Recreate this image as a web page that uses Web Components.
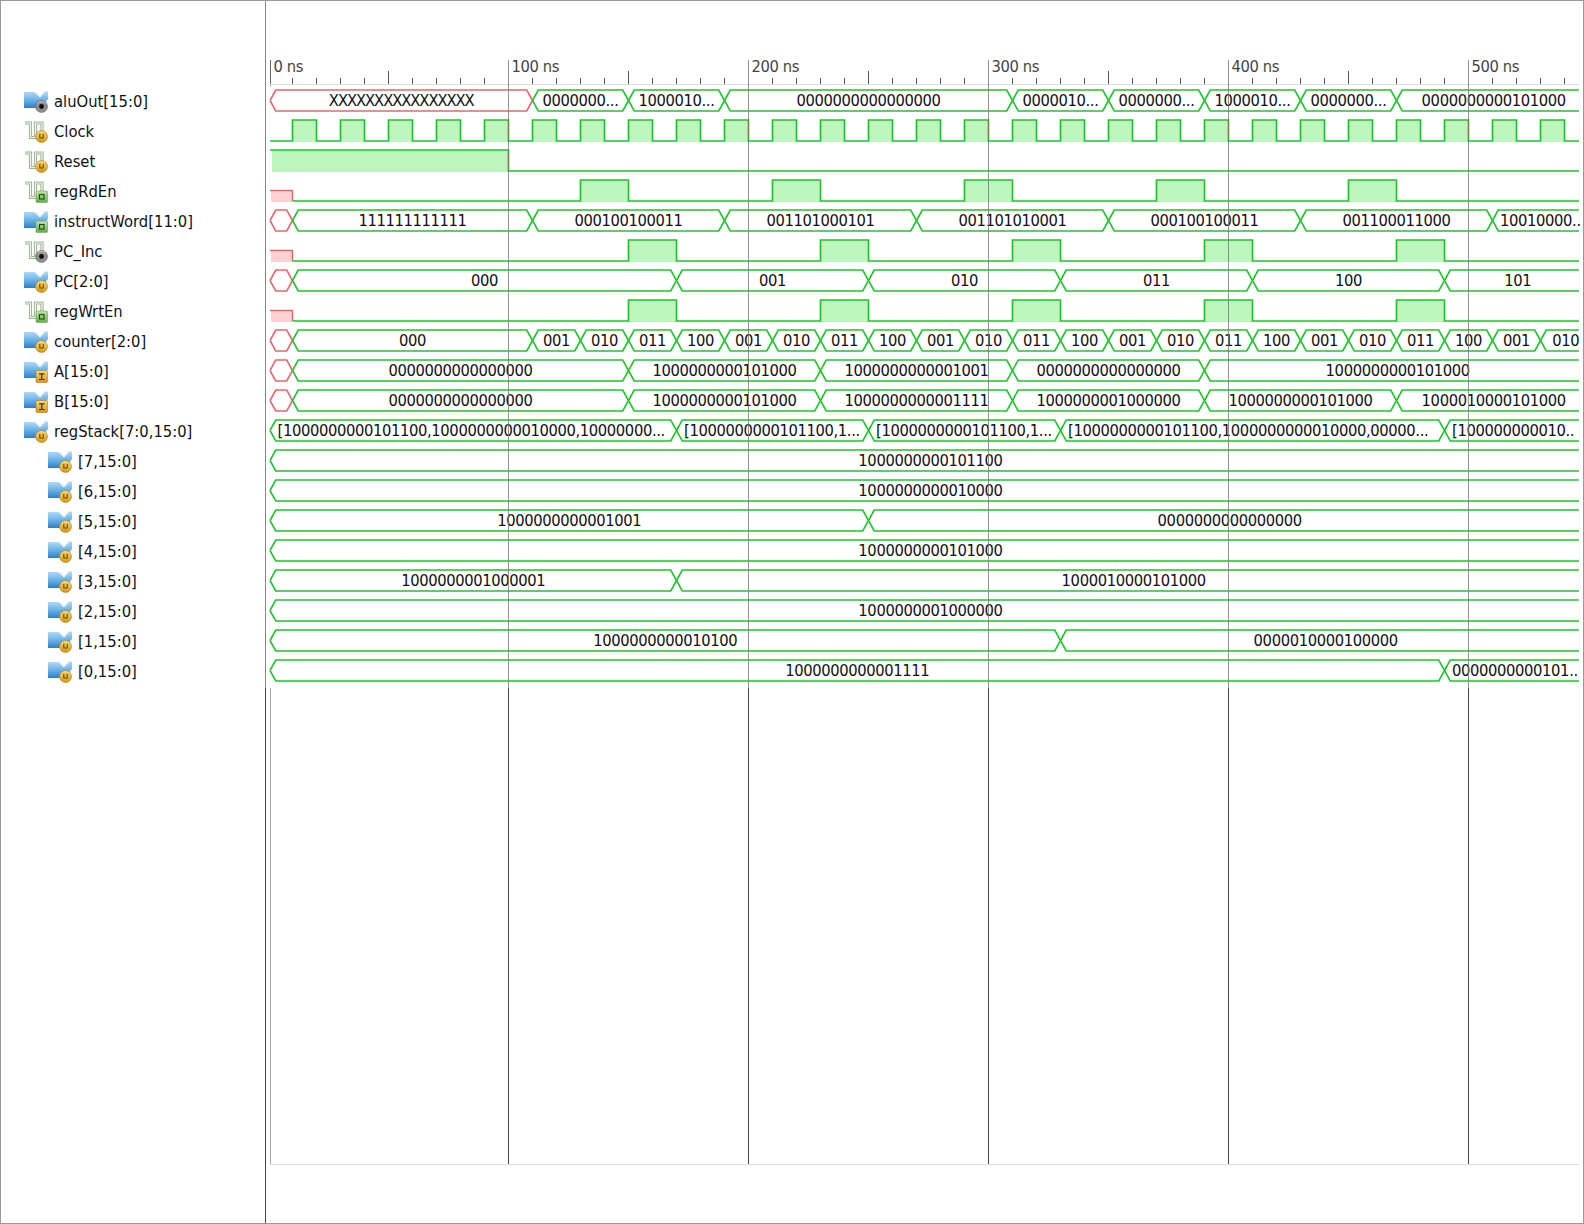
<!DOCTYPE html>
<html>
<head>
<meta charset="utf-8">
<title>Waveform</title>
<style>
  html, body { margin: 0; padding: 0; background: #fff; }
</style>
</head>
<body>
<wave-window>
  <signal-name slot="names" icon="bus" badge="io">aluOut[15:0]</signal-name>
  <signal-name slot="names" icon="bit" badge="u">Clock</signal-name>
  <signal-name slot="names" icon="bit" badge="u">Reset</signal-name>
  <signal-name slot="names" icon="bit" badge="o">regRdEn</signal-name>
  <signal-name slot="names" icon="bus" badge="o">instructWord[11:0]</signal-name>
  <signal-name slot="names" icon="bit" badge="io">PC_Inc</signal-name>
  <signal-name slot="names" icon="bus" badge="u">PC[2:0]</signal-name>
  <signal-name slot="names" icon="bit" badge="o">regWrtEn</signal-name>
  <signal-name slot="names" icon="bus" badge="u">counter[2:0]</signal-name>
  <signal-name slot="names" icon="bus" badge="i">A[15:0]</signal-name>
  <signal-name slot="names" icon="bus" badge="i">B[15:0]</signal-name>
  <signal-name slot="names" icon="bus" badge="u">regStack[7:0,15:0]</signal-name>
  <signal-name slot="names" icon="bus" badge="u" indent>[7,15:0]</signal-name>
  <signal-name slot="names" icon="bus" badge="u" indent>[6,15:0]</signal-name>
  <signal-name slot="names" icon="bus" badge="u" indent>[5,15:0]</signal-name>
  <signal-name slot="names" icon="bus" badge="u" indent>[4,15:0]</signal-name>
  <signal-name slot="names" icon="bus" badge="u" indent>[3,15:0]</signal-name>
  <signal-name slot="names" icon="bus" badge="u" indent>[2,15:0]</signal-name>
  <signal-name slot="names" icon="bus" badge="u" indent>[1,15:0]</signal-name>
  <signal-name slot="names" icon="bus" badge="u" indent>[0,15:0]</signal-name>

  <wave-bus slot="waves" data="0:!XXXXXXXXXXXXXXXX|110:0000000...|150:1000010...|190:0000000000000000|310:0000010...|350:0000000...|390:1000010...|430:0000000...|470:0000000000101000"></wave-bus>
  <wave-bit slot="waves" clock></wave-bit>
  <wave-bit slot="waves" start="1" edges="100"></wave-bit>
  <wave-bit slot="waves" unknown edges="130 150 210 230 290 310 370 390 450 470"></wave-bit>
  <wave-bus slot="waves" data="0:!|10:111111111111|110:000100100011|190:001101000101|270:001101010001|350:000100100011|430:001100011000|510:&lt;10010000.."></wave-bus>
  <wave-bit slot="waves" unknown edges="150 170 230 250 310 330 390 410 470 490"></wave-bit>
  <wave-bus slot="waves" data="0:!|10:000|170:001|250:010|330:011|410:100|490:101"></wave-bus>
  <wave-bit slot="waves" unknown edges="150 170 230 250 310 330 390 410 470 490"></wave-bit>
  <wave-bus slot="waves" data="0:!|10:000|110:001|130:010|150:011|170:100|190:001|210:010|230:011|250:100|270:001|290:010|310:011|330:100|350:001|370:010|390:011|410:100|430:001|450:010|470:011|490:100|510:001|530:010"></wave-bus>
  <wave-bus slot="waves" data="0:!|10:0000000000000000|150:1000000000101000|230:1000000000001001|310:0000000000000000|390:1000000000101000"></wave-bus>
  <wave-bus slot="waves" data="0:!|10:0000000000000000|150:1000000000101000|230:1000000000001111|310:1000000001000000|390:1000000000101000|470:1000010000101000"></wave-bus>
  <wave-bus slot="waves" data="0:&lt;[1000000000101100,1000000000010000,10000000...|170:&lt;[1000000000101100,1...|250:&lt;[1000000000101100,1...|330:&lt;[1000000000101100,1000000000010000,00000...|490:&lt;[100000000010.."></wave-bus>
  <wave-bus slot="waves" data="0:1000000000101100"></wave-bus>
  <wave-bus slot="waves" data="0:1000000000010000"></wave-bus>
  <wave-bus slot="waves" data="0:1000000000001001|250:0000000000000000"></wave-bus>
  <wave-bus slot="waves" data="0:1000000000101000"></wave-bus>
  <wave-bus slot="waves" data="0:1000000001000001|170:1000010000101000"></wave-bus>
  <wave-bus slot="waves" data="0:1000000001000000"></wave-bus>
  <wave-bus slot="waves" data="0:1000000000010100|330:0000010000100000"></wave-bus>
  <wave-bus slot="waves" data="0:1000000000001111|490:&lt;0000000000101.."></wave-bus>
</wave-window>

<script>
// page x of a simulation time in ns, 100 ns is 240 px
const T0 = 268.5;
const PX_NS = 2.4;
const T_END = 551;
const WAVE_LEFT = 266;
const WAVE_W = 1316;
const ROW_H = 30;
const HIGH = 4;
const LOW = 25;
const MID = 14.5;
const GREEN = "#22c22e";
const RED = "#e2686c";
const FONT = '"DejaVu Sans Condensed","DejaVu Sans",sans-serif';
const TEXT_CSS = `font: 16.4px ${FONT}; font-stretch: condensed; letter-spacing: -0.37px;`;

function tx(t) { return T0 + t * PX_NS; }

function svgOpen() {
  return `<svg xmlns="http://www.w3.org/2000/svg" width="${WAVE_W}" height="${ROW_H}" viewBox="${WAVE_LEFT} 0 ${WAVE_W} ${ROW_H}">`;
}

class WaveWindow extends HTMLElement {
  constructor() {
    super();
    this.attachShadow({ mode: "open" });
    let lines = "";
    for (let t = 0; t <= 500; t += 100) {
      let x = t === 0 ? 270.5 : tx(t);
      if (t > 0) {
        lines += `<path d="M${x} 60V688" stroke="#777" stroke-opacity=".8"/>`;
        lines += `<path d="M${x} 688V1164" stroke="#444"/>`;
      } else {
        lines += `<path d="M${x} 688V1164" stroke="#aaa"/>`;
      }
    }
    this.shadowRoot.innerHTML = `
      <style>
        :host { display: grid; grid-template-columns: 265px 1fr; width: 1584px; height: 1224px;
          box-sizing: border-box; border: 1px solid #999; background: #fff; font-family: ${FONT}; }
        .names { padding-top: 85px; background: linear-gradient(#888 0 687px, #444 687px) right / 1px 100% no-repeat; }
        .waves { position: relative; }
        .overlay { position: absolute; left: -266px; top: -1px; pointer-events: none; }
      </style>
      <div class="names"><slot name="names"></slot></div>
      <div class="waves">
        <wave-ruler></wave-ruler>
        <slot name="waves"></slot>
        <svg class="overlay" xmlns="http://www.w3.org/2000/svg" width="1584" height="1224" fill="none">
          ${lines}
          <path d="M270 1164.5H1579" stroke="#ddd"/>
        </svg>
      </div>`;
  }
}

class WaveRuler extends HTMLElement {
  constructor() {
    super();
    this.attachShadow({ mode: "open" });
    let ticks = "";
    let labels = "";
    for (let t = 10; t <= 540; t += 10) {
      if (t % 100 === 0) continue;
      let top = t % 50 === 0 ? 71 : 78;
      ticks += `<path d="M${tx(t)} ${top}V84" stroke="#555"/>`;
    }
    for (let t = 0; t <= 500; t += 100) {
      let x = t === 0 ? 270.5 : tx(t);
      labels += `<text x="${x + 3}" y="72">${t} ns</text>`;
    }
    this.shadowRoot.innerHTML = `
      <style>
        :host { display: block; height: 86px; margin-top: -1px; }
        svg { display: block; }
        text { ${TEXT_CSS} fill: #444; }
      </style>
      <svg xmlns="http://www.w3.org/2000/svg" width="${WAVE_W}" height="86" viewBox="${WAVE_LEFT} 0 ${WAVE_W} 86" fill="none">
        <path d="M270.5 60V90" stroke="#666"/>
        <path d="M270 84.5H1579" stroke="#ddd"/>
        ${ticks}
        ${labels}
      </svg>`;
  }
}

// name column entry with its icon
class SignalName extends HTMLElement {
  constructor() {
    super();
    this.attachShadow({ mode: "open" });
  }
  connectedCallback() {
    let art = this.getAttribute("icon") === "bus" ? this.busArt() : this.bitArt();
    this.shadowRoot.innerHTML = `
      <style>
        :host { display: flex; align-items: center; height: 30px; gap: 6px; color: #111;
          padding-left: ${this.hasAttribute("indent") ? 47 : 23}px;
          font: 16.45px ${FONT}; font-stretch: condensed; white-space: nowrap; }
        svg { flex: none; }
      </style>
      <svg xmlns="http://www.w3.org/2000/svg" width="24" height="24" viewBox="0 0 24 24" fill="none">
        <defs>
          <linearGradient id="b" x1="0" y1="0" x2="0" y2="1">
            <stop offset="0" stop-color="#b4dbf5"/><stop offset=".55" stop-color="#66afe6"/><stop offset="1" stop-color="#2f7fc8"/>
          </linearGradient>
          <linearGradient id="y" x1="0" y1="0" x2="0" y2="1">
            <stop offset="0" stop-color="#f7dc7a"/><stop offset="1" stop-color="#d8950f"/>
          </linearGradient>
          <linearGradient id="g" x1="0" y1="0" x2="0" y2="1">
            <stop offset="0" stop-color="#c4e6a8"/><stop offset="1" stop-color="#5fae45"/>
          </linearGradient>
        </defs>
        ${art}
        ${this.badgeArt()}
      </svg>
      <span><slot></slot></span>`;
  }
  busArt() {
    return `<path d="M0 3H10.5L16 8.5L21 2.5H24V10L20 15H14V19H0Z" fill="url(#b)"/>
      <path d="M11 2.5L16 7.5M21 2L16 7.5" stroke="#e6f2fa" stroke-width="1.2"/>`;
  }
  bitArt() {
    return `<path d="M1 4H6.5V18.5H11.5V4H18V13" stroke="#9cb596" stroke-width="3.2"/>
      <path d="M1 4H6.5V18.5H11.5V4H18V13" stroke="#eef5ea" stroke-width="1.2"/>`;
  }
  badgeArt() {
    let b = this.getAttribute("badge");
    if (b === "u") {
      return `<circle cx="17.5" cy="17.5" r="6" fill="url(#y)" stroke="#a87c20" stroke-width=".6"/>
        <path d="M15.8 14.8V19H19.2V14.8" stroke="#6b4a08" stroke-width="1.1"/>`;
    }
    if (b === "io") {
      return `<circle cx="17.5" cy="17.5" r="6" fill="#8d8d8d" stroke="#6a6a6a" stroke-width=".6"/>
        <circle cx="17.5" cy="17.5" r="2.4" fill="#111"/>
        <path d="M13.5 14.5A5 5 0 0 1 21.5 14.5" stroke="#d0d0d0"/>`;
    }
    if (b === "o") {
      return `<rect x="12" y="12" width="11.5" height="11.5" rx="1" fill="url(#g)" stroke="#6f9f58" stroke-width=".6"/>
        <rect x="15.5" y="15.5" width="4.5" height="4.5" stroke="#1e4d12" stroke-width="1.1"/>`;
    }
    return `<rect x="12" y="11.5" width="11.5" height="12" rx="1" fill="url(#y)" stroke="#a87c20" stroke-width=".6"/>
      <path d="M15 14.8H20.5M17.75 14.8V20.5M15 20.5H20.5" stroke="#4d3505" stroke-width="1.2"/>`;
  }
}

// single bit trace, edges are the ns where it toggles
class WaveBit extends HTMLElement {
  constructor() {
    super();
    this.attachShadow({ mode: "open" });
  }
  connectedCallback() {
    let edges = [];
    if (this.hasAttribute("clock")) {
      for (let t = 10; t <= 540; t += 10) edges.push(t);
    } else {
      edges = this.getAttribute("edges").split(" ").map(Number);
    }
    let unknown = this.hasAttribute("unknown");
    let level = this.getAttribute("start") === "1";
    let x0 = unknown ? tx(10) : 270;
    let line = `M${x0} ${level ? HIGH : LOW}`;
    let fill = "";
    let last = x0;
    edges.forEach(function(t) {
      let x = tx(t);
      if (level) {
        let inset = last === 270 ? 2 : 0;
        fill += `<rect x="${last + inset}" y="${HIGH}" width="${x - last - inset}" height="${LOW + 1 - HIGH}"/>`;
      }
      line += `H${x}V${level ? LOW : HIGH}`;
      level = !level;
      last = x;
    });
    line += `H1579`;
    let red = "";
    if (unknown) {
      red = `<rect x="271" y="${MID}" width="${tx(10) - 271}" height="${LOW + 1 - MID}" fill="#ffd0d2"/>
        <path d="M270 ${MID}H${tx(10)}V${LOW}" fill="none" stroke="${RED}" stroke-width="1.5"/>`;
    }
    this.shadowRoot.innerHTML = `
      <style>:host { display: block; height: ${ROW_H}px; } svg { display: block; }</style>
      ${svgOpen()}
        <g fill="#bdf5bf">${fill}</g>
        ${red}
        <path d="${line}" fill="none" stroke="${GREEN}" stroke-width="1.7"/>
      </svg>`;
  }
}

// bus trace, data is time:value pairs. ! marks an unknown span, < a left aligned value
class WaveBus extends HTMLElement {
  constructor() {
    super();
    this.attachShadow({ mode: "open" });
  }
  connectedCallback() {
    let segs = this.getAttribute("data").split("|").map(function(s) {
      let i = s.indexOf(":");
      return { t: Number(s.slice(0, i)), v: s.slice(i + 1) };
    });
    let out = "";
    segs.forEach(function(seg, i) {
      let a = seg.t === 0 ? 270 : tx(seg.t);
      let next = segs[i + 1];
      let b = next ? tx(next.t) : tx(T_END);
      let red = seg.v[0] === "!";
      let left = seg.v[0] === "<";
      let label = red || left ? seg.v.slice(1) : seg.v;
      let s = 5.75;
      let d = `M${a} ${MID}L${a + s} ${HIGH}`;
      d += next ? `H${b - s}L${b} ${MID}L${b - s} ${LOW}` : `H1579M1579 ${LOW}`;
      d += `H${a + s}L${a} ${MID}`;
      out += `<path d="${d}" fill="none" stroke="${red ? RED : GREEN}" stroke-width="1.6"/>`;
      if (label) {
        let pos = left ? `x="${a + 7.5}"` : `x="${(a + b) / 2}" text-anchor="middle"`;
        let squeeze = red ? ` style="letter-spacing:-1.05px"` : "";
        out += `<text ${pos} y="20"${squeeze}>${label}</text>`;
      }
    });
    this.shadowRoot.innerHTML = `
      <style>
        :host { display: block; height: ${ROW_H}px; }
        svg { display: block; }
        text { ${TEXT_CSS} fill: #111; }
      </style>
      ${svgOpen()}${out}</svg>`;
  }
}

window.customElements.define("wave-ruler", WaveRuler);
window.customElements.define("signal-name", SignalName);
window.customElements.define("wave-bit", WaveBit);
window.customElements.define("wave-bus", WaveBus);
window.customElements.define("wave-window", WaveWindow);
</script>
</body>
</html>
